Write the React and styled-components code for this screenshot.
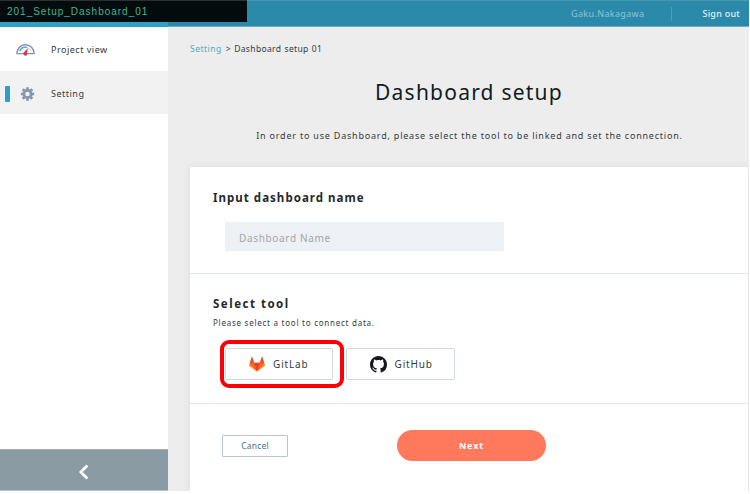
import React from 'react';
import styled, { createGlobalStyle } from 'styled-components';

const GlobalStyle = createGlobalStyle`
  *, *::before, *::after { box-sizing: border-box; }
  body {
    margin: 0;
    background: #fff;
    overflow: hidden;
    font-family: 'Noto Sans', 'Open Sans', sans-serif;
    color: #333c40;
  }
  button, input { font-family: inherit; }
`;

const Screen = styled.div`
  position: relative;
  width: 749px;
  height: 491px;
  display: grid;
  grid-template: 27px 464px / 168px 581px;
  overflow: hidden;
`;

const Brand = styled.div`
  background: #309fc4;
`;

const TopBar = styled.header`
  display: flex;
  align-items: center;
  justify-content: flex-end;
  padding-right: 9px;
  background: #2b8aaa;
  border-top: 1px solid #4698b3;
  border-bottom: 1px solid #68adc3;
  font-size: 9px;
  line-height: 12px;
`;

const UserName = styled.span`
  color: #8fc4d6;
  letter-spacing: 0.35px;
`;

const Separator = styled.span`
  width: 1px;
  height: 14px;
  margin: 0 30px 0 27px;
  background: #529fb7;
`;

const SignOut = styled.a`
  color: #e2f2f7;
  font-weight: 500;
  letter-spacing: 0.25px;
`;

const ScreenTag = styled.div`
  position: absolute;
  top: 0;
  left: 0;
  width: 247px;
  height: 22px;
  padding-left: 7px;
  background: #040b0d;
  border-top: 1px solid #2c3233;
  color: #40b894;
  font: 10px/21px 'Liberation Sans', sans-serif;
  letter-spacing: 0.99px;
`;

const Sidebar = styled.nav`
  display: flex;
  flex-direction: column;
  background: #fff;
`;

const NavItem = styled.a`
  display: flex;
  align-items: center;
  height: ${(p) => (p.$active ? 43 : 44)}px;
  padding: 2px 0 0 5px;
  background: ${(p) => (p.$active ? '#f2f2f2' : '#fff')};
  color: #333c40;
  font-size: 9px;
  line-height: 12px;
  letter-spacing: 0.5px;
`;

const Marker = styled.span`
  width: 5px;
  height: 16px;
  border-radius: 1px;
  background: ${(p) => (p.$active ? '#2d9fc2' : 'transparent')};
`;

const NavIcon = styled.span`
  display: flex;
  align-items: center;
  justify-content: center;
  width: 20px;
  margin: 0 15px 0 6px;
  transform: translateX(${(p) => p.$shift || 0}px);
`;

const Collapse = styled.button`
  display: flex;
  align-items: center;
  justify-content: center;
  height: 42px;
  margin-top: auto;
  padding: 3px 0 0;
  border: 0;
  border-top: 1px solid #a5b2b8;
  border-bottom: 1px solid #b6c3cb;
  background: #8a9ba3;
`;

const Main = styled.main`
  display: flex;
  flex-direction: column;
  padding-left: 22px;
  background: #ededed;
`;

const Breadcrumb = styled.div`
  height: 12px;
  margin-top: 16px;
  font-size: 8.5px;
  line-height: 12px;
  letter-spacing: 0.36px;
  word-spacing: 0.5px;
  white-space: nowrap;
`;

const Crumb = styled.a`
  margin-right: 1px;
  color: #48acc9;
  letter-spacing: 0.5px;
`;

const Title = styled.h1`
  height: 30px;
  margin: 22px 0 0;
  padding-right: 1px;
  color: #0f1c22;
  font-size: 21px;
  font-weight: 400;
  line-height: 30px;
  letter-spacing: 1.22px;
  text-align: center;
`;

const Lead = styled.p`
  height: 12px;
  margin: 23px 0 0;
  font-size: 9px;
  line-height: 12px;
  letter-spacing: 0.79px;
  text-align: center;
  white-space: nowrap;
`;

const Card = styled.section`
  height: 324px;
  margin-top: 25px;
  margin-right: 1px;
  background: #fff;
  border-radius: 2px 2px 0 0;
  box-shadow: 0 0 10px rgba(0, 0, 0, 0.07);
`;

const Section = styled.div`
  height: ${(p) => p.$height}px;
  padding: ${(p) => p.$top}px 0 0 23px;
  border-bottom: 1px solid #e1e8ea;
`;

const SectionTitle = styled.h2`
  height: 16px;
  margin: 0;
  color: #24292c;
  font-size: 11.5px;
  font-weight: 700;
  line-height: 16px;
  letter-spacing: ${(p) => p.$spacing}px;
`;

const NameInput = styled.input`
  display: block;
  width: 279px;
  height: 29px;
  margin: 16px 0 0 12px;
  padding: 2px 14px 0;
  border: 0;
  border-radius: 1px;
  background: #edf1f6;
  font-size: 10px;
  letter-spacing: 0.66px;
  &::placeholder { color: #a2a6a9; opacity: 1; }
`;

const Hint = styled.p`
  height: 12px;
  margin: 5px 0 0;
  font-size: 8px;
  line-height: 12px;
  letter-spacing: 0.75px;
`;

const Tools = styled.div`
  display: flex;
  gap: 13px;
  margin: 19px 0 0 12px;
`;

const ToolButton = styled.button`
  position: relative;
  display: flex;
  align-items: center;
  gap: 8px;
  width: ${(p) => p.$width}px;
  height: 32px;
  padding: 0 0 0 ${(p) => p.$inset}px;
  border: 1px solid #d0d9de;
  border-radius: 2px;
  background: #fff;
  color: #333c40;
  font-size: 10px;
  letter-spacing: 0.85px;
`;

const Highlight = styled.span`
  position: absolute;
  top: -9px;
  left: -6px;
  width: 124px;
  height: 48px;
  border: 4px solid #fb0004;
  border-radius: 9px;
`;

const Actions = styled.div`
  display: flex;
  align-items: center;
  padding: 26px 0 0 32px;
`;

const CancelButton = styled.button`
  width: 66px;
  height: 22px;
  padding: 0;
  border: 1px solid #b5c7cd;
  border-radius: 1px;
  background: #fff;
  color: #467486;
  font-size: 8.5px;
  letter-spacing: 0.2px;
`;

const NextButton = styled.button`
  width: 149px;
  height: 31px;
  margin-left: 109px;
  padding: 0;
  border: 0;
  border-radius: 16px;
  background: #ff795c;
  color: #fff;
  font-size: 9px;
  font-weight: 700;
  letter-spacing: 0.9px;
`;

const GaugeIcon = () => (
  <svg width="20" height="14" viewBox="0 0 20 14" fill="none">
    <path d="M1.4 10.6C1.4 5.5 5.2 1.7 10 1.7s8.6 3.8 8.6 8.9z" stroke="#8492a3" strokeWidth="1.4" strokeLinejoin="round" />
    <path d="M4.2 8.3C5 5.8 7.1 4.3 9.6 4.3h2" stroke="#55a5ef" strokeWidth="1.4" />
    <path d="M12.5 5.2c1.5.5 2.6 1.6 3.2 3.1" stroke="#c8d3dd" strokeWidth="1" />
    <circle cx="10" cy="10.7" r="2" fill="#8c6278" />
    <path d="M12.3 4.9L8 9.7a1.8 1.8 0 0 0 3.3 1.3z" fill="#ed3149" />
  </svg>
);

const GearIcon = () => (
  <svg width="14" height="14" viewBox="-7 -7 14 14" fill="none" stroke="#8497ad">
    <circle r="3.7" strokeWidth="2.8" />
    {[0, 45, 90, 135].map((angle) => (
      <path key={angle} d="M0-6.8V-4.5M0 4.5V6.8" strokeWidth="2.7" transform={`rotate(${angle})`} />
    ))}
  </svg>
);

const GitLabIcon = () => (
  <svg width="16" height="15" viewBox="0 0 16 15">
    <path d="M3.3.5c-.1-.4-.6-.4-.8 0L.2 8.2c-.1.4 0 .7.3.9L8 14.5l7.5-5.4c.3-.2.4-.5.3-.9L13.5.5c-.1-.4-.6-.4-.8 0l-1.8 5.3H5.1z" fill="#f5652b" />
    <path d="M8 14.5L5.1 5.8h5.800z" fill="#e24329" />
    <path d="M.7 6.800L.2 8.200c-.1.400 0 .7.300.9L8 14.500zM15.300 6.800l.5 1.400c.1.400 0 .7-.3.900L8 14.500z" fill="#fc9b2c" />
    <path d="M1 5.800h4.100L3.300.5c-.1-.4-.6-.4-.8 0zM15 5.800h-4.100L12.700.5c.2-.4.700-.4.800 0z" fill="#e7512d" />
  </svg>
);

const GitHubIcon = () => (
  <svg width="17" height="17" viewBox="0 0 16 16" fill="#16191b">
    <path d="M8 0C3.58 0 0 3.58 0 8c0 3.54 2.29 6.53 5.47 7.59.4.07.55-.17.55-.38 0-.19-.01-.82-.01-1.49-2.01.37-2.53-.49-2.69-.94-.09-.23-.48-.94-.82-1.13-.28-.15-.68-.52-.01-.53.63-.01 1.08.58 1.23.82.72 1.21 1.87.87 2.33.66.07-.52.28-.87.51-1.07-1.78-.2-3.64-.89-3.64-3.95 0-.87.31-1.59.82-2.15-.08-.2-.36-1.02.08-2.12 0 0 .67-.21 2.2.82.64-.18 1.32-.27 2-.27s1.36.09 2 .27c1.53-1.04 2.2-.82 2.2-.82.44 1.1.16 1.92.08 2.12.51.56.82 1.27.82 2.15 0 3.07-1.87 3.75-3.65 3.95.29.25.54.73.54 1.48 0 1.07-.01 1.93-.01 2.2 0 .21.15.46.55.38A8.01 8.01 0 0 0 16 8c0-4.42-3.58-8-8-8z" />
  </svg>
);

const ChevronIcon = () => (
  <svg width="12" height="18" viewBox="0 0 12 18" fill="none">
    <path d="M9.3 2.5L2.8 9l6.5 6.5" stroke="#fff" strokeWidth="2.6" />
  </svg>
);

export default function App() {
  return (
    <>
      <GlobalStyle />
      <Screen>
        <Brand />
        <TopBar>
          <UserName>Gaku.Nakagawa</UserName>
          <Separator />
          <SignOut>Sign out</SignOut>
        </TopBar>
        <Sidebar>
          <NavItem>
            <Marker />
            <NavIcon $shift={-0.5}><GaugeIcon /></NavIcon>
            Project view
          </NavItem>
          <NavItem $active>
            <Marker $active />
            <NavIcon $shift={1.5}><GearIcon /></NavIcon>
            Setting
          </NavItem>
          <Collapse aria-label="Collapse"><ChevronIcon /></Collapse>
        </Sidebar>
        <Main>
          <Breadcrumb><Crumb>Setting</Crumb> &gt; Dashboard setup 01</Breadcrumb>
          <Title>Dashboard setup</Title>
          <Lead>In order to use Dashboard, please select the tool to be linked and set the connection.</Lead>
          <Card>
            <Section $height={107} $top={23}>
              <SectionTitle $spacing={1.03}>Input dashboard name</SectionTitle>
              <NameInput placeholder="Dashboard Name" />
            </Section>
            <Section $height={130} $top={22}>
              <SectionTitle $spacing={1.5}>Select tool</SectionTitle>
              <Hint>Please select a tool to connect data.</Hint>
              <Tools>
                <ToolButton $width={108} $inset={23}>
                  <GitLabIcon />
                  GitLab
                  <Highlight />
                </ToolButton>
                <ToolButton $width={109} $inset={22.5}>
                  <GitHubIcon />
                  GitHub
                </ToolButton>
              </Tools>
            </Section>
            <Actions>
              <CancelButton>Cancel</CancelButton>
              <NextButton>Next</NextButton>
            </Actions>
          </Card>
        </Main>
        <ScreenTag>201_Setup_Dashboard_01</ScreenTag>
      </Screen>
    </>
  );
}
